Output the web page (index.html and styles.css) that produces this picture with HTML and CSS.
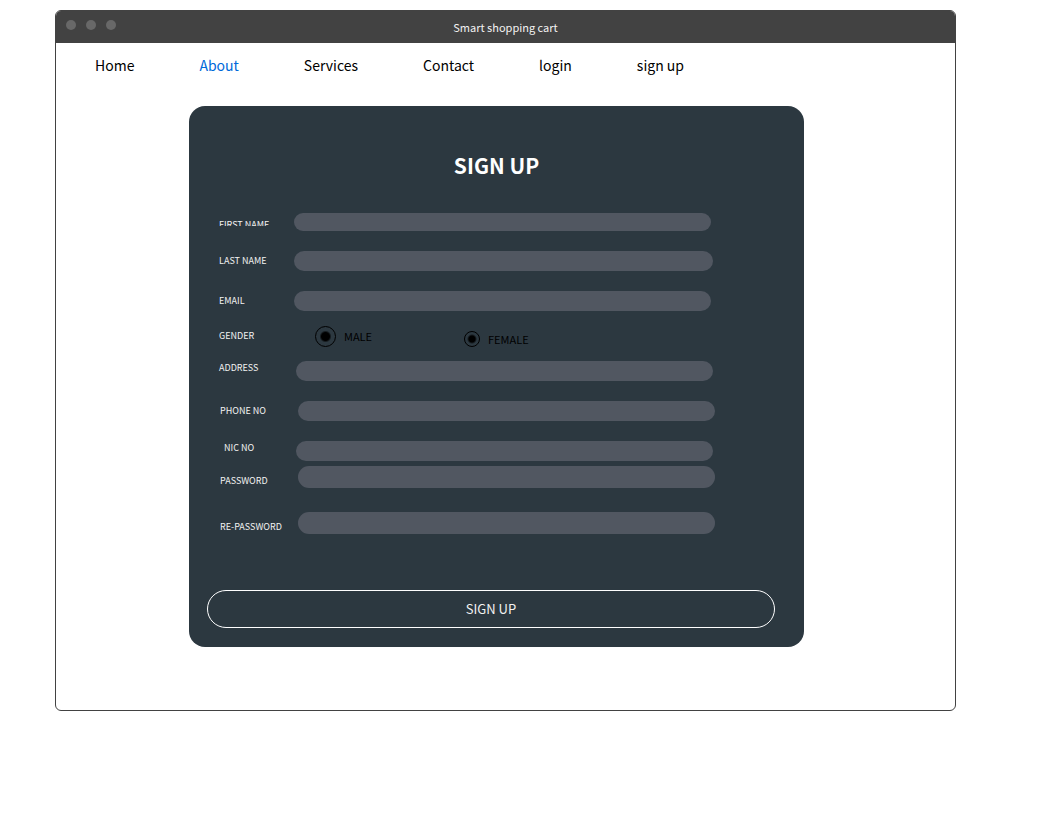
FILE: index.html
```html
<!DOCTYPE html>
<html lang="en">
<head>
<meta charset="utf-8">
<title>Smart shopping cart</title>
<link rel="stylesheet" href="styles.css">
</head>
<body>
<div class="window">
  <header class="titlebar">
    <div class="dots"><span class="dot"></span><span class="dot"></span><span class="dot"></span></div>
    <span class="title">Smart shopping cart</span>
  </header>
  <nav class="nav">
    <a href="#">Home</a>
    <a href="#" class="active">About</a>
    <a href="#">Services</a>
    <a href="#">Contact</a>
    <a href="#">login</a>
    <a href="#">sign up</a>
  </nav>
  <main class="card">
    <h1 class="heading">SIGN UP</h1>
    <form class="form">
      <div class="group">
        <div class="row short"><label class="clipped" for="first">FIRST NAME</label><input id="first" type="text"></div>
        <div class="row wide"><label for="last">LAST NAME</label><input id="last" type="text"></div>
        <div class="row"><label for="email">EMAIL</label><input id="email" type="email"></div>
      </div>
      <div class="row gender" role="radiogroup" aria-labelledby="gender">
        <span class="caption" id="gender">GENDER</span>
        <div class="options">
          <label class="option"><input class="large" type="radio" name="gender" value="male">MALE</label>
          <label class="option"><input type="radio" name="gender" value="female">FEMALE</label>
        </div>
      </div>
      <div class="group">
        <div class="row middle top"><label for="address">ADDRESS</label><input id="address" type="text"></div>
        <div class="row far"><label for="phone">PHONE NO</label><input id="phone" type="tel"></div>
        <div class="row middle top inset"><label for="nic">NIC NO</label><input id="nic" type="text"></div>
      </div>
      <div class="group passwords">
        <div class="row far tall"><label for="password">PASSWORD</label><input id="password" type="password"></div>
        <div class="row far tall"><label for="repassword">RE-PASSWORD</label><input id="repassword" type="password"></div>
      </div>
      <button class="submit" type="submit">SIGN UP</button>
    </form>
  </main>
</div>
</body>
</html>
```
FILE: styles.css
```css
* {
  box-sizing: border-box;
}

body {
  margin: 0;
  padding: 10px 94px 40px 55px;
  background: #fff;
  color: #000;
  font-family: "Noto Sans CJK SC", "Noto Sans", sans-serif;
}

.window {
  border: 1px solid #424242;
  border-radius: 6px;
  overflow: hidden;
  padding-bottom: 63px;
}

.titlebar {
  display: grid;
  grid-template-columns: 1fr auto 1fr;
  align-items: center;
  height: 32px;
  padding: 0 10px;
  background: #424242;
  color: #f2f2f2;
  font-size: 11px;
  line-height: 20px;
}

.dots {
  display: flex;
  gap: 10px;
  padding-bottom: 4px;
}

.dot {
  width: 10px;
  height: 10px;
  border-radius: 50%;
  background: #686868;
}

.nav {
  display: flex;
  gap: 65px;
  padding: 10px 39px 29px;
  font-size: 14px;
  line-height: 24px;
}

.nav a {
  color: #000;
  text-decoration: none;
  white-space: nowrap;
}

.nav .active {
  color: #0069d9;
}

.card {
  margin: 0 151px 0 133px;
  padding: 43px 0 19px;
  border-radius: 16px;
  background: #2c3840;
}

.heading {
  margin: 0 0 32px;
  color: #fff;
  font-size: 21px;
  font-weight: 700;
  line-height: 32px;
  text-align: center;
}

.form,
.group {
  display: flex;
  flex-direction: column;
}

.group {
  gap: 20px;
}

.row {
  --label: 75px;
  --end: 93px;
  --indent: 0px;
  display: grid;
  grid-template-columns: var(--label) 1fr;
  align-items: center;
  height: 20px;
  padding: 0 var(--end) 0 30px;
  color: #f2f2f2;
  font-size: 9px;
  line-height: 14px;
}

.row > label {
  padding-left: var(--indent);
  white-space: nowrap;
}

.row > input {
  width: 100%;
  height: 100%;
  min-width: 0;
  padding: 0 10px;
  border: 0;
  border-radius: 11px;
  background: #515761;
  color: #f2f2f2;
  font: inherit;
}

.short {
  height: 18px;
}

.clipped {
  height: 8px;
  overflow: hidden;
}

.wide {
  --end: 91px;
}

.middle {
  --label: 77px;
  --end: 91px;
}

.far {
  --label: 79px;
  --end: 89px;
  --indent: 1px;
}

.inset {
  --indent: 5px;
}

.top {
  align-items: start;
}

.tall {
  align-items: end;
  height: 22px;
}

.gender {
  height: 50px;
}

.options {
  display: grid;
  grid-template-columns: 149px auto;
  align-items: end;
  padding-left: 21px;
}

.option {
  display: flex;
  align-items: center;
  gap: 8px;
  color: #000;
  font-size: 11px;
  line-height: 16px;
}

.option input {
  appearance: none;
  width: 16px;
  height: 16px;
  margin: 0;
  border: 1px solid #000;
  border-radius: 50%;
  background: radial-gradient(circle, #000 3px, transparent 5px);
}

.option .large {
  width: 21px;
  height: 21px;
  background: radial-gradient(circle, #000 4px, transparent 6px);
}

.passwords {
  gap: 24px;
  padding: 5px 0 56px;
}

.submit {
  height: 38px;
  margin: 0 29px 0 18px;
  border: 1px solid #fff;
  border-radius: 19px;
  background: transparent;
  color: #f2f2f2;
  font: inherit;
  font-size: 13px;
  line-height: 20px;
}
```
